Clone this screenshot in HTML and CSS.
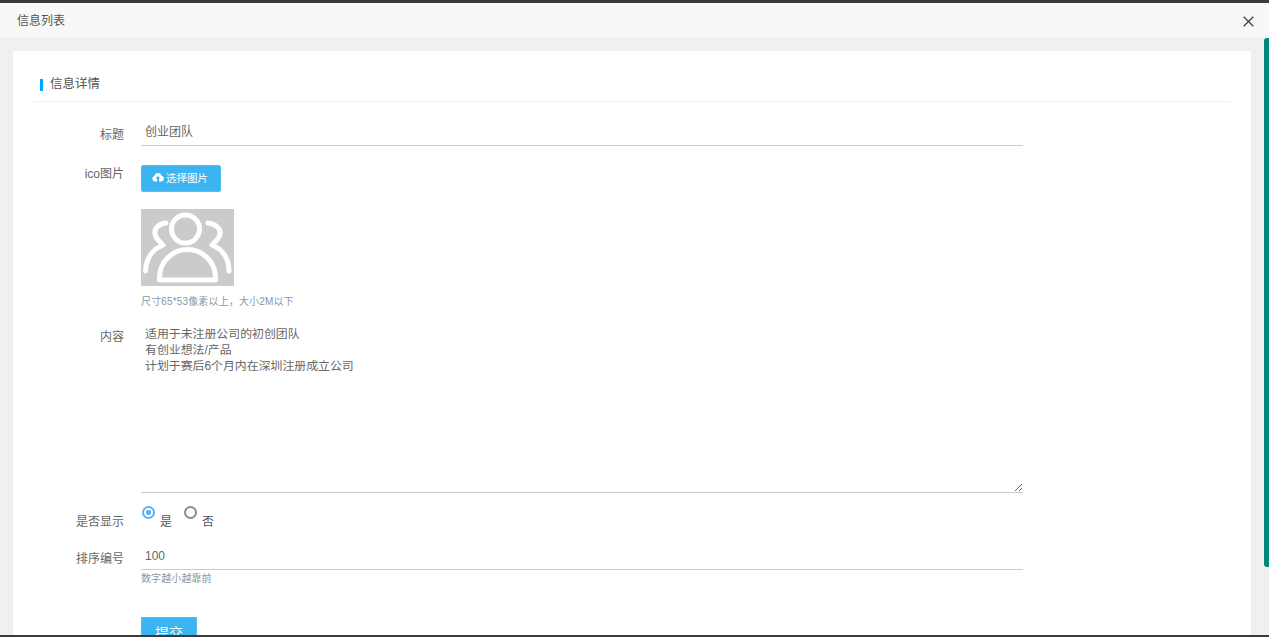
FILE: index.html
```html
<!DOCTYPE html>
<html lang="zh-CN">
<head>
<meta charset="utf-8">
<title>信息列表</title>
<link rel="stylesheet" href="styles.css">
</head>
<body>
<div class="frame">
  <header class="bar">
    <span class="bar-title">信息列表</span>
    <svg class="close" width="11" height="11" viewBox="0 0 11 11" aria-label="关闭"><path d="M.7.7l9.6 9.6M10.3.7L.7 10.3" stroke="#3f3f46" stroke-width="1.3" fill="none"/></svg>
  </header>
  <main class="main">
    <div class="thumb"></div>
    <section class="card">
      <h2 class="heading"><span class="mark"></span>信息详情</h2>
      <form class="form">
        <div class="row row-title">
          <label class="label label-title">标题</label>
          <div class="field"><input class="input" type="text" value="创业团队"></div>
        </div>
        <div class="row row-ico">
          <label class="label label-ico">ico图片</label>
          <div class="field">
            <button type="button" class="upload">
              <svg width="12" height="10" viewBox="0 0 12 10"><path fill="#fff" d="M3 9.6A2.800 2.800 0 0 1 2.400 4.100 3.700 3.700 0 0 1 9.500 3.500 3.100 3.100 0 0 1 9.200 9.600H7V6.600H8.500L6 3.900 3.500 6.600H5V9.600Z"/></svg>
              选择图片
            </button>
            <div class="preview">
              <svg width="93" height="77" viewBox="0 0 93 77">
                <rect width="93" height="77" fill="#cbcbcb"/>
                <g fill="none" stroke="#fff" stroke-width="5" stroke-linecap="round" stroke-linejoin="round">
                  <circle cx="44.500" cy="20" r="14"/>
                  <path d="M18.500 71V68.500A28 28 0 0 1 74.500 68.500V71Z"/>
                  <path d="M25 14C17 15 13 20 14 25C15 30 19 33 22 36C12 40 5 49 4.500 62"/>
                  <path d="M67 14C75 15 80 20 79 25C78 30 74 33 71 36C81 40 88 49 88 62"/>
                </g>
              </svg>
            </div>
            <p class="hint hint-ico">尺寸65*53像素以上，大小2M以下</p>
          </div>
        </div>
        <div class="row row-content">
          <label class="label label-content">内容</label>
          <div class="field"><textarea class="textarea">适用于未注册公司的初创团队
有创业想法/产品
计划于赛后6个月内在深圳注册成立公司</textarea></div>
        </div>
        <div class="row row-radio">
          <label class="label label-radio">是否显示</label>
          <div class="radios">
            <label class="radio"><input class="dot" type="radio" name="show" checked><span>是</span></label>
            <label class="radio"><input class="dot" type="radio" name="show"><span>否</span></label>
          </div>
        </div>
        <div class="row row-order">
          <label class="label label-order">排序编号</label>
          <div class="field">
            <input class="input input-order" type="text" value="100">
            <p class="hint hint-order">数字越小越靠前</p>
          </div>
        </div>
        <div class="row row-submit">
          <button type="button" class="submit">提交</button>
        </div>
      </form>
    </section>
  </main>
</div>
</body>
</html>
```

FILE: styles.css
```css
* { box-sizing: border-box; }
html, body { margin: 0; height: 637px; overflow: hidden; }
body {
  font-family: "Liberation Sans", "Noto Sans CJK SC", sans-serif;
  font-size: 12px;
  color: #666;
  background: #f0f0f0;
}
.frame {
  height: 637px;
  display: flex;
  flex-direction: column;
  overflow: hidden;
  border-top: 3px solid #3a3a3a;
  border-bottom: 2px solid #3a3a3a;
  position: relative;
}
.bar {
  flex: none;
  height: 34px;
  background: #f8f8f8;
  display: flex;
  align-items: center;
  justify-content: space-between;
  padding: 0 15px 0 17px;
}
.bar-title { color: #555; line-height: 34px; margin-top: 1px; }
.close { display: block; margin-top: 2px; }
.main {
  flex: 1;
  min-height: 0;
  overflow: hidden;
  padding: 14px 18px 0 13px;
  background: #f0f0f0;
}
.thumb {
  position: absolute;
  top: 35px;
  right: 0;
  width: 5px;
  height: 529px;
  background: #00897b;
  border-radius: 3px 0 0 3px;
}
.card {
  background: #fff;
  padding: 0 20px;
  height: 700px;
}
.heading {
  margin: 0;
  height: 51px;
  padding: 25px 0 0 7px;
  font-size: 12.5px;
  font-weight: 400;
  line-height: 16px;
  color: #555;
  border-bottom: 1px solid #f1f1f1;
  display: flex;
  align-items: flex-start;
  gap: 7px;
}
.mark {
  width: 3px;
  height: 12px;
  margin-top: 3px;
  background: #00a8ff;
}
.form { display: block; }
.row { display: flex; align-items: flex-start; }
.label {
  flex: none;
  width: 91px;
  text-align: right;
  color: #666;
  line-height: 16px;
}
.field { flex: none; width: 882px; margin-left: 17px; }
.input, .textarea {
  display: block;
  width: 100%;
  border: 0;
  border-bottom: 1px solid #c9cad6;
  border-radius: 0;
  outline: 0;
  background: #fff;
  color: #666;
  font: inherit;
  padding: 0 4px;
}
.input { height: 28px; padding-bottom: 2px; }
.row-title { padding-top: 16px; }
.label-title { margin-top: 9px; }
.row-ico { padding-top: 19px; }
.label-ico { margin-top: 1px; }
.upload {
  display: flex;
  align-items: center;
  justify-content: center;
  gap: 2px;
  width: 80px;
  height: 27px;
  padding: 0 2px 3px 0;
  border: 1px solid #56bdf3;
  border-radius: 2px;
  background: #3bb4f2;
  color: #fff;
  font: inherit;
  font-size: 10.5px;
}
.preview { margin-top: 17px; height: 77px; }
.preview svg { display: block; }
.hint { margin: 0; font-size: 10px; line-height: 14px; color: #8a97a5; }
.hint-ico { margin-top: 9px; letter-spacing: .15px; }
.row-content { padding-top: 17px; }
.label-content { margin-top: 3px; }
.textarea {
  height: 167px;
  padding-top: 0;
  font-size: 11.9px;
  line-height: 16px;
  resize: vertical;
}
.row-radio { padding-top: 13px; height: 52px; }
.label-radio { margin-top: 8px; }
.radios { display: flex; margin-left: 18px; gap: 12px; }
.radio { display: flex; align-items: flex-start; color: #555; }
.radio span { line-height: 16px; margin: 8px 0 0 5px; }
.dot {
  appearance: none;
  margin: 0;
  width: 13px;
  height: 13px;
  border-radius: 50%;
  border: 2px solid #8c8c8c;
  background: #fff;
}
.dot:checked {
  border-color: #5fb1f5;
  background: radial-gradient(circle, #5fb1f5 0 2.5px, #fff 3px);
}
.row-order { padding-top: 0; }
.label-order { margin-top: 6px; }
.input-order { height: 25px; padding-bottom: 2px; }
.hint-order { margin-top: 2px; letter-spacing: .1px; }
.row-submit { padding: 31px 0 0 108px; }
.submit {
  width: 56px;
  height: 30px;
  padding: 0;
  border: 1px solid #56bdf3;
  background: #3bb4f2;
  color: #fff;
  font: inherit;
  font-size: 14px;
}
```
